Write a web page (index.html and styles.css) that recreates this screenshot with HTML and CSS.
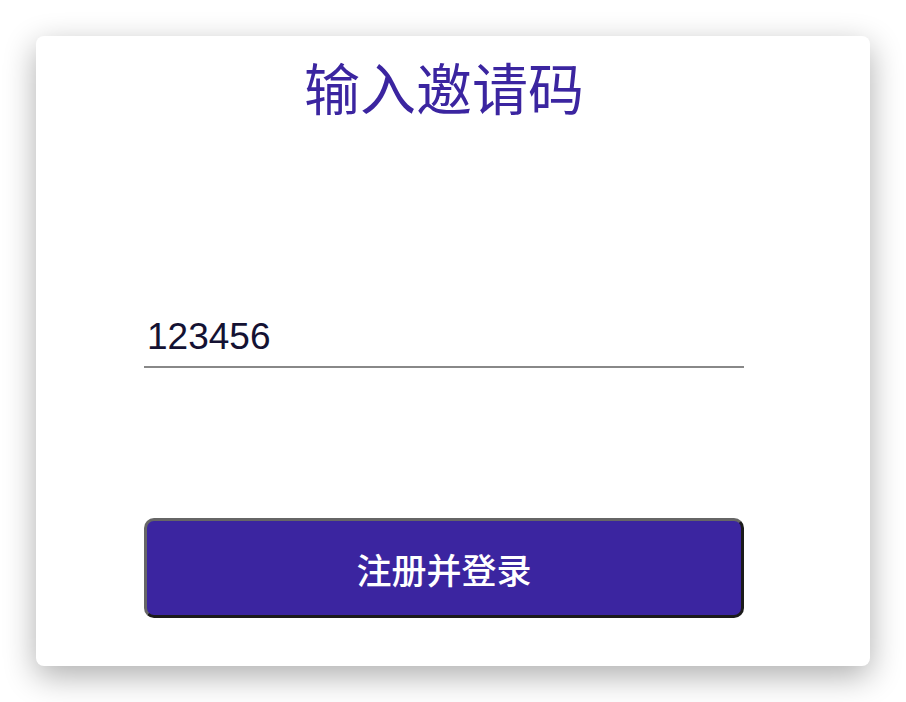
FILE: index.html
```html
<!DOCTYPE html>
<html lang="zh">
<head>
<meta charset="utf-8">
<title>输入邀请码</title>
<link rel="stylesheet" href="styles.css">
</head>
<body>
<div class="card">
  <h1 class="title">输入邀请码</h1>
  <input class="code-input" type="text" value="123456">
  <button class="submit" type="button">注册并登录</button>
</div>
</body>
</html>
```

FILE: styles.css
```css
html, body {
  margin: 0;
  padding: 0;
  background: #ffffff;
}
body {
  box-sizing: border-box;
  min-height: 702px;
  padding: 36px 0 36px 36px;
  font-family: "Noto Sans CJK SC", "Liberation Sans", sans-serif;
}
.card {
  box-sizing: border-box;
  width: 834px;
  height: 630px;
  background: #ffffff;
  border-radius: 8px;
  box-shadow: 0 10px 32px rgba(0, 0, 0, 0.32);
  padding: 0 126px 0 108px;
  display: flex;
  flex-direction: column;
}
.title {
  margin: 18px 0 0;
  font-size: 56px;
  line-height: 64px;
  font-weight: 400;
  color: #3b25a0;
  text-align: center;
}
.code-input {
  box-sizing: content-box;
  margin: 198px 0 0;
  width: 597px;
  height: 42px;
  padding: 0 0 8px 3px;
  border: none;
  border-bottom: 2px solid #888888;
  outline: none;
  background: transparent;
  font-family: "Liberation Sans", "Noto Sans CJK SC", sans-serif;
  font-size: 37px;
  color: #141233;
}
.submit {
  box-sizing: border-box;
  margin-top: 150px;
  width: 600px;
  height: 100px;
  border-style: solid;
  border-width: 3px;
  border-color: #666666 #1b1b1b #1b1b1b #666666;
  border-radius: 10px;
  background: #3b25a0;
  color: #ffffff;
  font-family: "Noto Sans CJK SC", sans-serif;
  font-size: 35px;
  font-weight: 500;
  padding: 0;
}
```
